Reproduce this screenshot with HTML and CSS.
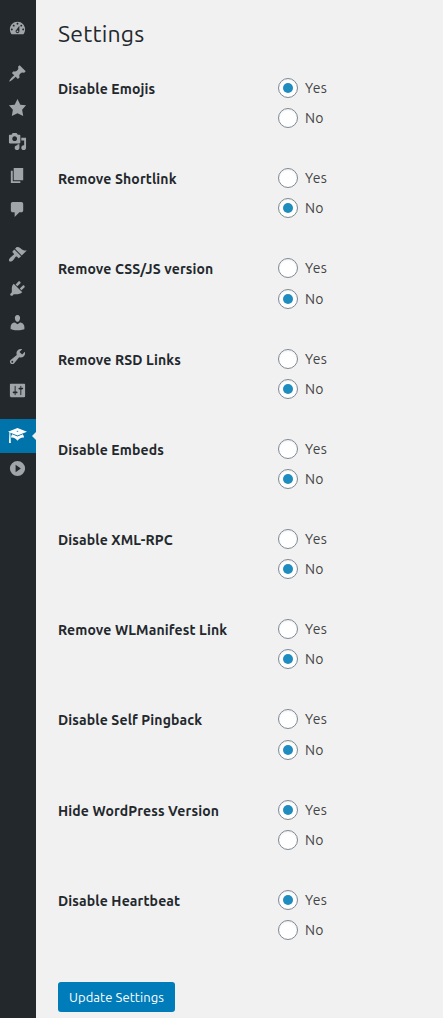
FILE: index.html
```html
<!DOCTYPE html>
<html lang="en">
<head>
<meta charset="utf-8">
<title>Settings</title>
<link rel="stylesheet" href="styles.css">
</head>
<body>
<nav class="menu">
  <div class="group">
    <a class="item"><svg viewBox="0 0 20 20"><path fill-rule="evenodd" d="M3.76 16h12.48c1.1-1.37 1.76-3.11 1.76-5 0-4.42-3.58-8-8-8s-8 3.58-8 8c0 1.89.66 3.63 1.76 5zM10 4c.55 0 1 .45 1 1s-.45 1-1 1-1-.45-1-1 .45-1 1-1zM6 6c.55 0 1 .45 1 1s-.45 1-1 1-1-.45-1-1 .45-1 1-1zm8 0c.55 0 1 .45 1 1s-.45 1-1 1-1-.45-1-1 .45-1 1-1zm-5.37 5.55L12 7v6c0 1.1-.9 2-2 2s-2-.9-2-2c0-.57.24-1.08.63-1.45zM4 10c.55 0 1 .45 1 1s-.45 1-1 1-1-.45-1-1 .45-1 1-1zm12 0c.55 0 1 .45 1 1s-.45 1-1 1-1-.45-1-1 .45-1 1-1zm-5 3c0-.55-.45-1-1-1s-1 .45-1 1 .45 1 1 1 1-.45 1-1z"/></svg></a>
  </div>
  <div class="group">
    <a class="item"><svg viewBox="0 0 20 20"><path d="M10.44 3.02l1.82-1.82 6.36 6.35-1.83 1.82c-1.05-.68-2.48-.57-3.41.36l-.75.75c-.92.93-1.04 2.35-.35 3.41l-1.83 1.82-2.41-2.41-2.8 2.79c-.42.42-3.38 2.71-3.8 2.29s1.86-3.39 2.28-3.81l2.79-2.79L4.1 9.36l1.83-1.82c1.05.69 2.48.57 3.4-.36l.75-.75c.93-.92 1.05-2.35.36-3.41z"/></svg></a>
    <a class="item"><svg viewBox="0 0 20 20"><path d="M10 1l3 6 6 .75-4.12 4.62L16 19l-6-3-6 3 1.13-6.63L1 7.75 7 7z"/></svg></a>
    <a class="item"><svg viewBox="0 0 20 20"><path fill-rule="evenodd" d="M13 11V4c0-.55-.45-1-1-1h-1.67L9 1H5L3.67 3H2c-.55 0-1 .45-1 1v7c0 .55.45 1 1 1h10c.55 0 1-.45 1-1zM7 4.5c1.38 0 2.5 1.12 2.5 2.5S8.38 9.5 7 9.5 4.5 8.38 4.5 7 5.62 4.5 7 4.5zM14 6h5v10.5c0 1.38-1.12 2.5-2.5 2.5S14 17.88 14 16.5s1.12-2.5 2.5-2.5c.17 0 .34.02.5.05V9h-3V6zm-4 8.05V13h2v3.5c0 1.38-1.12 2.5-2.5 2.5S7 17.88 7 16.5 8.12 14 9.5 14c.17 0 .34.02.5.05z"/></svg></a>
    <a class="item"><svg viewBox="0 0 20 20"><path d="M6 15V2h10v13H6zm-1 1h8v2H3V5h2v11z"/></svg></a>
    <a class="item"><svg viewBox="0 0 20 20"><path d="M5 2h9c1.1 0 2 .9 2 2v7c0 1.1-.9 2-2 2h-2l-5 5v-5H5c-1.1 0-2-.9-2-2V4c0-1.1.9-2 2-2z"/></svg></a>
  </div>
  <div class="group">
    <a class="item"><svg viewBox="0 0 20 20"><path d="M14.48 11.06L7.41 3.99l1.5-1.5c.5-.56 2.3-.47 3.51.32 1.21.8 1.43 1.28 2.91 2.1 1.18.64 2.45 1.26 4.45.85zm-.71.71L6.7 4.7 4.93 6.47c-.39.39-.39 1.02 0 1.41l1.06 1.06c.39.39.39 1.03 0 1.42-.6.6-1.43 1.11-2.21 1.69-.35.26-.7.53-1.01.84C1.43 14.23.4 16.08 1.4 17.07c.99 1 2.84-.03 4.18-1.36.31-.31.58-.66.85-1.02.57-.78 1.08-1.61 1.69-2.21.39-.39 1.02-.39 1.41 0l1.06 1.06c.39.39 1.02.39 1.41 0z"/></svg></a>
    <a class="item"><svg viewBox="0 0 20 20"><path d="M13.11 4.36L9.87 7.6 8 5.73l3.24-3.24c.35-.34 1.05-.2 1.56.32.52.51.66 1.21.31 1.55zm-8 1.77l.91-1.12 9.01 9.01-1.19.84c-.71.71-2.63 1.16-3.82 1.16H6.14L4.9 17.26c-.59.59-1.54.59-2.12 0-.59-.58-.59-1.53 0-2.12l1.24-1.24v-3.88c0-1.13.4-3.19 1.09-3.89zm7.26 3.97l3.24-3.24c.34-.35 1.04-.21 1.55.31.52.51.66 1.21.31 1.55l-3.24 3.25z"/></svg></a>
    <a class="item"><svg viewBox="0 0 20 20"><path d="M10 9.25c-2.27 0-2.73-3.44-2.73-3.44C7 4.02 7.82 2 9.97 2c2.16 0 2.98 2.02 2.71 3.81 0 0-.41 3.44-2.68 3.44zm0 2.57L12.72 10c2.39 0 4.52 2.33 4.52 4.53v2.49s-3.65 1.13-7.24 1.13c-3.65 0-7.24-1.13-7.24-1.13v-2.49c0-2.25 1.94-4.48 4.47-4.48z"/></svg></a>
    <a class="item"><svg viewBox="0 0 20 20"><path fill-rule="evenodd" d="M16.68 9.77c-1.34 1.34-3.3 1.67-4.95.99l-5.41 6.52c-.99.99-2.59.99-3.58 0s-.99-2.59 0-3.57l6.52-5.42c-.68-1.65-.35-3.61.99-4.95 1.28-1.28 3.12-1.62 4.72-1.06l-2.89 2.89 2.82 2.82 2.86-2.87c.53 1.58.18 3.39-1.08 4.65zM3.81 16.21c.4.39 1.04.39 1.43 0 .4-.4.4-1.04 0-1.43-.39-.4-1.03-.4-1.43 0-.39.39-.39 1.03 0 1.43z"/></svg></a>
    <a class="item"><svg viewBox="0 0 20 20"><path fill-rule="evenodd" d="M18 16V4c0-.55-.45-1-1-1H3c-.55 0-1 .45-1 1v12c0 .55.45 1 1 1h14c.55 0 1-.45 1-1zM8 11h1c.55 0 1 .45 1 1s-.45 1-1 1H8v1.5c0 .28-.22.5-.5.5s-.5-.22-.5-.5V13H6c-.55 0-1-.45-1-1s.45-1 1-1h1V5.5c0-.28.22-.5.5-.5s.5.22.5.5V11zm5-2h-1c-.55 0-1-.45-1-1s.45-1 1-1h1V5.5c0-.28.22-.5.5-.5s.5.22.5.5V7h1c.55 0 1 .45 1 1s-.45 1-1 1h-1v5.5c0 .28-.22.5-.5.5s-.5-.22-.5-.5V9z"/></svg></a>
  </div>
  <div class="group">
    <a class="item current"><svg viewBox="0 0 20 20"><path fill-rule="evenodd" d="M10 10L2.54 7.02 3 18H1l.48-11.41L0 6l10-4 10 4zm0-5c-.55 0-1 .22-1 .5s.45.5 1 .5 1-.22 1-.5-.45-.5-1-.5zm0 6l5.57-2.23c.71.94 1.2 2.07 1.36 3.3-.3-.04-.61-.07-.93-.07-2.55 0-4.78 1.37-6 3.41C8.78 13.37 6.55 12 4 12c-.32 0-.63.03-.93.07.16-1.23.65-2.36 1.36-3.3z"/></svg></a>
    <a class="item collapse"><svg viewBox="0 0 20 20"><path fill-rule="evenodd" d="M10 2a8 8 0 1 1 0 16 8 8 0 0 1 0-16zM8 6v8l5.5-4z"/></svg></a>
  </div>
</nav>
<main class="content">
  <h1 class="title">Settings</h1>
  <form class="options">
    <div class="row"><div class="name">Disable Emojis</div><div class="choices"><label class="choice"><input class="radio" type="radio" name="emojis" checked>Yes</label><label class="choice"><input class="radio" type="radio" name="emojis">No</label></div></div>
    <div class="row"><div class="name">Remove Shortlink</div><div class="choices"><label class="choice"><input class="radio" type="radio" name="shortlink">Yes</label><label class="choice"><input class="radio" type="radio" name="shortlink" checked>No</label></div></div>
    <div class="row"><div class="name">Remove CSS/JS version</div><div class="choices"><label class="choice"><input class="radio" type="radio" name="version">Yes</label><label class="choice"><input class="radio" type="radio" name="version" checked>No</label></div></div>
    <div class="row"><div class="name">Remove RSD Links</div><div class="choices"><label class="choice"><input class="radio" type="radio" name="rsd">Yes</label><label class="choice"><input class="radio" type="radio" name="rsd" checked>No</label></div></div>
    <div class="row"><div class="name">Disable Embeds</div><div class="choices"><label class="choice"><input class="radio" type="radio" name="embeds">Yes</label><label class="choice"><input class="radio" type="radio" name="embeds" checked>No</label></div></div>
    <div class="row"><div class="name">Disable XML-RPC</div><div class="choices"><label class="choice"><input class="radio" type="radio" name="xmlrpc">Yes</label><label class="choice"><input class="radio" type="radio" name="xmlrpc" checked>No</label></div></div>
    <div class="row"><div class="name">Remove WLManifest Link</div><div class="choices"><label class="choice"><input class="radio" type="radio" name="manifest">Yes</label><label class="choice"><input class="radio" type="radio" name="manifest" checked>No</label></div></div>
    <div class="row"><div class="name">Disable Self Pingback</div><div class="choices"><label class="choice"><input class="radio" type="radio" name="pingback">Yes</label><label class="choice"><input class="radio" type="radio" name="pingback" checked>No</label></div></div>
    <div class="row"><div class="name">Hide WordPress Version</div><div class="choices"><label class="choice"><input class="radio" type="radio" name="wpversion" checked>Yes</label><label class="choice"><input class="radio" type="radio" name="wpversion">No</label></div></div>
    <div class="row"><div class="name">Disable Heartbeat</div><div class="choices"><label class="choice"><input class="radio" type="radio" name="heartbeat" checked>Yes</label><label class="choice"><input class="radio" type="radio" name="heartbeat">No</label></div></div>
    <button class="save" type="button">Update Settings</button>
  </form>
</main>
</body>
</html>
```
FILE: styles.css
```css
* { box-sizing: border-box; }
body {
  margin: 0;
  height: 1018px;
  display: flex;
  overflow: hidden;
  background: #f1f1f1;
  color: #23282d;
  font-family: Ubuntu, "Noto Sans", sans-serif;
  font-size: 14px;
}
.menu {
  flex: none;
  width: 36px;
  height: 1018px;
  padding-top: 12px;
  display: flex;
  flex-direction: column;
  gap: 11px;
  background: #23282d;
}
.item {
  position: relative;
  height: 34px;
  padding: 0 0 1px 8px;
  display: flex;
  align-items: center;
}
.item svg { width: 19px; height: 19px; fill: #a0a5aa; }
.current { background: #0073aa; }
.current svg { fill: #fff; }
.current::after {
  content: "";
  position: absolute;
  right: 0;
  top: 13px;
  border: 4px solid transparent;
  border-left-width: 0;
  border-right-color: #f1f1f1;
}
.collapse { height: 32px; }
.content { flex: 1; padding: 19px 0 0 22px; }
.title {
  margin: 0;
  height: 30px;
  line-height: 30px;
  font-size: 23px;
  font-weight: 400;
  letter-spacing: 0.2px;
}
.options { padding-top: 24px; }
.row {
  display: grid;
  grid-template-columns: 220px 1fr;
  height: 90.2px;
}
.name {
  line-height: 33px;
  font-size: 14px;
  font-weight: 700;
  letter-spacing: 0.13px;
  white-space: nowrap;
}
.choice {
  display: flex;
  align-items: center;
  gap: 7px;
  height: 30.2px;
  color: #444;
  letter-spacing: 0.3px;
}
.radio {
  appearance: none;
  width: 20px;
  height: 20px;
  margin: 0;
  display: grid;
  place-items: center;
  border: 1px solid #7e8993;
  border-radius: 50%;
  background: #fff;
  box-shadow: inset 0 1px 2px rgba(0, 0, 0, 0.07);
}
.radio:checked::before {
  content: "";
  width: 10px;
  height: 10px;
  border-radius: 50%;
  background: #1e8cbe;
}
.save {
  display: block;
  width: 117px;
  height: 30px;
  margin-top: 7px;
  padding: 0;
  border: 0;
  border-radius: 3px;
  background: #007cba;
  color: #fff;
  font: 13px/30px Ubuntu, "Noto Sans", sans-serif;
  letter-spacing: 0.07px;
}
```
